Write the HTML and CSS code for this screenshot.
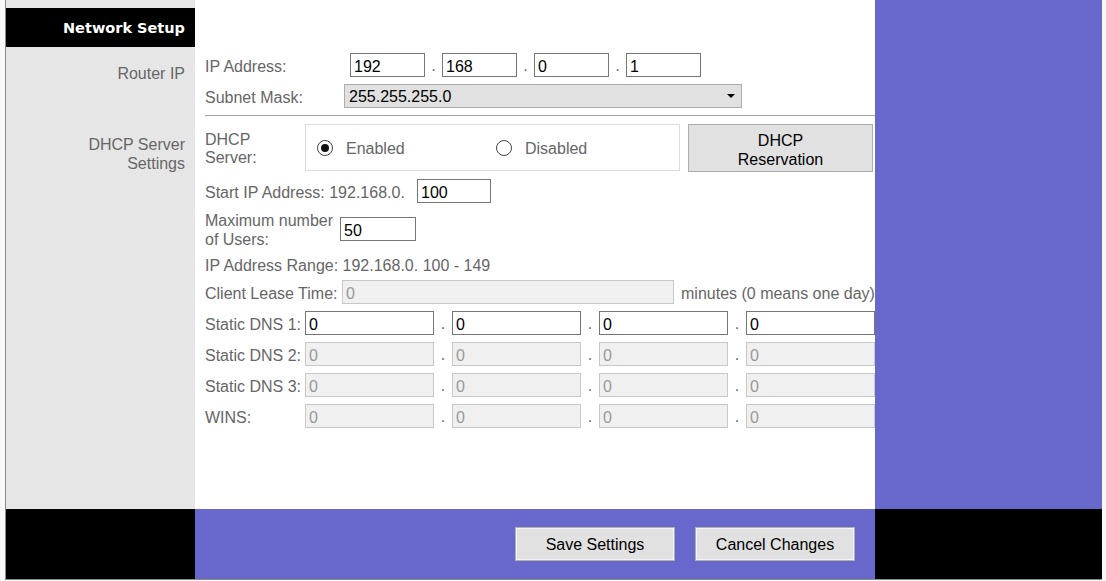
FILE: index.html
```html
<!DOCTYPE html>
<html>
<head>
<meta charset="utf-8">
<title>Network Setup</title>
<link rel="stylesheet" href="styles.css">
</head>
<body>
<div class="frame">
  <div class="side side-head">
    <div class="side-gap"></div>
    <h1 class="side-title">Network Setup</h1>
  </div>
  <div class="main-head"></div>
  <div class="rail"></div>

  <div class="side side-label side-router">Router IP</div>
  <section class="router">
    <div class="row">
      <span class="lbl lbl-ip">IP Address:</span>
      <span class="ip-group">
        <span class="field f-ip">192</span><span class="dot">.</span><span class="field f-ip">168</span><span class="dot">.</span><span class="field f-ip">0</span><span class="dot">.</span><span class="field f-ip">1</span>
      </span>
    </div>
    <div class="row">
      <span class="lbl lbl-ip">Subnet Mask:</span>
      <span class="select"><span class="select-text">255.255.255.0</span><span class="caret"></span></span>
    </div>
  </section>

  <div class="side side-label side-dhcp">DHCP Server<br>Settings</div>
  <section class="dhcp">
    <div class="row row-dhcp">
      <span class="lbl lbl-two lbl-dns">DHCP<br>Server:</span>
      <span class="radio-box">
        <span class="opt opt-first"><span class="radio checked"></span><span class="opt-text">Enabled</span></span>
        <span class="opt"><span class="radio"></span><span class="opt-text">Disabled</span></span>
      </span>
      <span class="btn btn-res">DHCP<br>Reservation</span>
    </div>
    <div class="row">
      <span class="lbl lbl-start">Start IP Address: 192.168.0.</span>
      <span class="field f-start">100</span>
    </div>
    <div class="row row-users">
      <span class="lbl lbl-two lbl-users">Maximum number<br>of Users:</span>
      <span class="field f-users">50</span>
    </div>
    <div class="row row-range">
      <span class="lbl">IP Address Range: 192.168.0. 100 - 149</span>
    </div>
    <div class="row">
      <span class="lbl lbl-lease">Client Lease Time:</span>
      <span class="field f-lease off">0</span>
      <span class="lbl note">minutes (0 means one day)</span>
    </div>
    <div class="row">
      <span class="lbl lbl-dns">Static DNS 1:</span>
      <span class="field f-dns">0</span><span class="dot dot-w">.</span><span class="field f-dns">0</span><span class="dot dot-w">.</span><span class="field f-dns">0</span><span class="dot dot-w">.</span><span class="field f-dns">0</span>
    </div>
    <div class="row">
      <span class="lbl lbl-dns">Static DNS 2:</span>
      <span class="field f-dns off">0</span><span class="dot dot-w">.</span><span class="field f-dns off">0</span><span class="dot dot-w">.</span><span class="field f-dns off">0</span><span class="dot dot-w">.</span><span class="field f-dns off">0</span>
    </div>
    <div class="row">
      <span class="lbl lbl-dns">Static DNS 3:</span>
      <span class="field f-dns off">0</span><span class="dot dot-w">.</span><span class="field f-dns off">0</span><span class="dot dot-w">.</span><span class="field f-dns off">0</span><span class="dot dot-w">.</span><span class="field f-dns off">0</span>
    </div>
    <div class="row">
      <span class="lbl lbl-dns">WINS:</span>
      <span class="field f-dns off">0</span><span class="dot dot-w">.</span><span class="field f-dns off">0</span><span class="dot dot-w">.</span><span class="field f-dns off">0</span><span class="dot dot-w">.</span><span class="field f-dns off">0</span>
    </div>
  </section>

  <div class="foot-left"></div>
  <div class="foot-mid">
    <span class="btn btn-foot">Save Settings</span>
    <span class="btn btn-foot">Cancel Changes</span>
  </div>
  <div class="foot-right"></div>
</div>
</body>
</html>
```

FILE: styles.css
```css
html, body {
  margin: 0;
  padding: 0;
}
body {
  background: #f8f8f8;
  font-family: "Liberation Sans", Arial, sans-serif;
  font-size: 16px;
  color: #666;
}
.frame {
  margin-left: 5px;
  width: 1096px;
  border-left: 1px solid #8c8c8c;
  border-bottom: 1px solid #8c8c8c;
  display: grid;
  grid-template-columns: 189px 680px 227px;
  grid-template-rows: 47px 70px 392px 70px;
}
.side {
  background: #e6e6e6;
  grid-column: 1;
}
.side-head {
  grid-row: 1;
}
.side-gap {
  height: 8px;
}
.side-title {
  margin: 0;
  box-sizing: border-box;
  height: 39px;
  padding-top: 2px;
  line-height: 37px;
  background: #000;
  color: #fff;
  font-family: "DejaVu Sans", Verdana, sans-serif;
  font-weight: bold;
  font-size: 14.5px;
  text-align: right;
  padding-right: 10px;
}
.main-head {
  grid-column: 2;
  grid-row: 1;
  background: #fff;
}
.rail {
  grid-column: 3;
  grid-row: 1 / 4;
  background: #6767cc;
}
.side-label {
  text-align: right;
  padding-right: 10px;
  line-height: 19px;
}
.side-router {
  grid-row: 2;
  padding-top: 17px;
}
.side-dhcp {
  grid-row: 3;
  padding-top: 18px;
}
.router {
  grid-column: 2;
  grid-row: 2;
  background: #fff;
  padding-left: 10px;
  display: flex;
  flex-direction: column;
  gap: 7px;
  padding-top: 6px;
  padding-bottom: 7px;
  box-sizing: border-box;
}
.router::after {
  content: "";
  display: block;
  border-bottom: 1px solid #a0a0a0;
}
.dhcp {
  grid-column: 2;
  grid-row: 3;
  background: #fff;
  padding-left: 10px;
  padding-top: 7px;
  display: flex;
  flex-direction: column;
  gap: 7px;
}
.row {
  display: flex;
  align-items: center;
  height: 24px;
}
.lbl {
  white-space: nowrap;
  line-height: 19px;
  padding-top: 2px;
}
.lbl-two {
  line-height: 18px;
}
.lbl-ip { width: 139px; }
.lbl-dns { width: 100px; }
.lbl-start { width: 212px; }
.lbl-users { width: 135px; line-height: 19px; }
.lbl-lease { width: 137px; }
.note { margin-left: 7px; }
.ip-group {
  display: flex;
  align-items: center;
  margin-left: 6px;
}
.field {
  box-sizing: border-box;
  height: 24px;
  border: 1px solid #767676;
  background: #fff;
  color: #000;
  padding-top: 3px;
  line-height: 19px;
  padding-left: 3px;
  white-space: nowrap;
}
.field.off {
  background: #f0f0f0;
  border-color: #c8c8c8;
  color: #999;
}
.f-ip { width: 75px; }
.f-start { width: 74px; }
.f-users { width: 76px; }
.f-lease { width: 332px; }
.f-dns { width: 129px; }
.dot {
  width: 17px;
  text-align: center;
  color: #666;
  padding-top: 2px;
}
.dot-w { width: 18px; }
.select {
  box-sizing: border-box;
  width: 398px;
  height: 24px;
  background: #e1e1e1;
  border: 1px solid #adadad;
  color: #000;
  display: flex;
  align-items: center;
  justify-content: space-between;
  padding: 0 6px 0 4px;
}
.select-text {
  padding-top: 2px;
}
.caret {
  width: 0;
  height: 0;
  border-left: 4px solid transparent;
  border-right: 4px solid transparent;
  border-top: 4px solid #000;
}
.row-dhcp {
  height: 48px;
  align-items: flex-start;
}
.row-dhcp .lbl-dns {
  align-self: center;
}
.radio-box {
  box-sizing: border-box;
  width: 375px;
  height: 47px;
  border: 1px solid #dcdcdc;
  display: flex;
  align-items: center;
  padding-left: 11px;
}
.opt {
  display: flex;
  align-items: center;
  gap: 13px;
}
.opt-text {
  padding-top: 2px;
}
.opt-first { width: 179px; }
.radio {
  box-sizing: border-box;
  width: 16px;
  height: 16px;
  border: 1px solid #444;
  border-radius: 50%;
  background: #fff;
  display: flex;
  align-items: center;
  justify-content: center;
}
.radio.checked::after {
  content: "";
  width: 8px;
  height: 8px;
  border-radius: 50%;
  background: #111;
}
.btn {
  box-sizing: border-box;
  background: #e1e1e1;
  border: 1px solid #adadad;
  color: #000;
  text-align: center;
  display: flex;
  align-items: center;
  justify-content: center;
  padding-top: 2px;
}
.btn-res {
  width: 185px;
  height: 48px;
  margin-left: 8px;
  line-height: 19px;
  padding-top: 3px;
}
.row-users { height: 38px; }
.row-range { height: 18px; }
.foot-left, .foot-right {
  background: #000;
  grid-row: 4;
}
.foot-left { grid-column: 1; }
.foot-right { grid-column: 3; }
.foot-mid {
  grid-column: 2;
  grid-row: 4;
  background: #6767cc;
  display: flex;
  justify-content: flex-end;
  align-items: center;
  gap: 20px;
  padding-right: 20px;
}
.btn-foot {
  width: 160px;
  height: 34px;
  box-shadow: inset 0 0 0 1px #f4f4f4;
  border-color: #b0b0b0;
}
```
